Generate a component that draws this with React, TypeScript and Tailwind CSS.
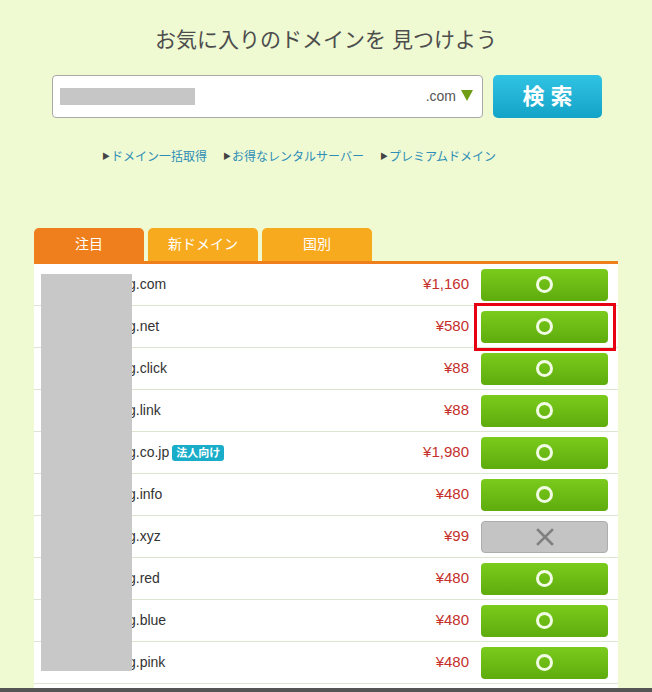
import React from 'react';

type Row = {
  tld: string;
  price: string;
  ok: boolean;
  badge?: string;
};

const rows: Row[] = [
  { tld: 'g.com', price: '¥1,160', ok: true },
  { tld: 'g.net', price: '¥580', ok: true },
  { tld: 'g.click', price: '¥88', ok: true },
  { tld: 'g.link', price: '¥88', ok: true },
  { tld: 'g.co.jp', price: '¥1,980', ok: true, badge: '法人向け' },
  { tld: 'g.info', price: '¥480', ok: true },
  { tld: 'g.xyz', price: '¥99', ok: false },
  { tld: 'g.red', price: '¥480', ok: true },
  { tld: 'g.blue', price: '¥480', ok: true },
  { tld: 'g.pink', price: '¥480', ok: true },
  { tld: '', price: '', ok: true },
];

const links = ['ドメイン一括取得', 'お得なレンタルサーバー', 'プレミアムドメイン'];

const tabs = [
  { label: '注目', active: true },
  { label: '新ドメイン', active: false },
  { label: '国別', active: false },
];

const OkButton: React.FC = () => (
  <div className="w-[127px] h-[32px] rounded-[4px] bg-gradient-to-b from-[#7acb1c] to-[#5eac0d] flex items-center justify-center">
    <span className="w-[17px] h-[17px] rounded-full border-[3px] border-[#f2fbe4]"></span>
  </div>
);

const NgButton: React.FC = () => (
  <div className="w-[127px] h-[32px] rounded-[4px] bg-[#c4c4c4] border border-[#adadad] flex items-center justify-center">
    <svg width="18" height="18" viewBox="0 0 18 18">
      <path d="M2 2 L16 16 M16 2 L2 16" stroke="#808080" strokeWidth="2.6" strokeLinecap="square" />
    </svg>
  </div>
);

export default function App() {
  return (
    <div
      className="relative h-[692px] overflow-hidden bg-[#effad3]"
      style={{ fontFamily: '"Liberation Sans", "Noto Sans CJK JP", sans-serif' }}
    >
      {/* Heading */}
      <h1 className="pt-[25px] text-center text-[21px] leading-[30px] text-[#4d4d4d]">
        お気に入りのドメインを 見つけよう
      </h1>

      {/* Search */}
      <div className="mt-[20px] flex justify-center gap-[10px] pl-[2px]">
        <div className="relative w-[431px] h-[43px] bg-white border border-[#a9a9a9] rounded-[4px] flex items-center pr-[9px]">
          <span className="absolute left-[7px] top-[12px] w-[135px] h-[17px] bg-[#c6c6c6]"></span>
          <span className="ml-auto text-[14px] text-[#555]">.com</span>
          <svg className="ml-[5px] mb-[2px]" width="12" height="11" viewBox="0 0 12 11">
            <path d="M0 0 H12 L6 11 Z" fill="#6f9e16" />
          </svg>
        </div>
        <button className="w-[109px] h-[43px] rounded-[5px] bg-gradient-to-b from-[#30c3e3] to-[#12a3c8] text-white text-[22px] font-bold tracking-[6px] pl-[6px]">
          検索
        </button>
      </div>

      {/* Links */}
      <div className="mt-[30px] flex gap-[16px] pl-[102px] text-[12px] text-[#2d8db6]">
        {links.map((l) => (
          <span key={l} className="flex items-center">
            <span className="text-[8px] text-[#444] mr-[1px]">▶</span>
            {l}
          </span>
        ))}
      </div>

      {/* Table */}
      <div className="mt-[62px] mx-auto w-[584px]">
        <div className="flex gap-[4px] border-b-[3px] border-[#ee7f1c]">
          {tabs.map((t) => (
            <div
              key={t.label}
              className={`w-[110px] h-[33px] rounded-t-[5px] flex items-center justify-center text-[14px] text-white ${
                t.active ? 'bg-[#ee7f1c]' : 'bg-[#f7aa1e]'
              }`}
            >
              {t.label}
            </div>
          ))}
        </div>

        <div className="relative bg-white">
          {rows.map((r, i) => (
            <div
              key={i}
              className="h-[42px] flex items-center border-b border-[#dbe5d2] pl-[94px] pr-[10px]"
            >
              <span className="text-[14px] text-[#333]">{r.tld}</span>
              {r.badge && (
                <span className="ml-[3px] h-[16px] px-[4px] rounded-[3px] bg-[#19adc9] text-white text-[11px] font-bold leading-[16px]">
                  {r.badge}
                </span>
              )}
              <span className="ml-auto mr-[12px] text-[15px] text-[#c4302b]">{r.price}</span>
              <div className="relative">
                {r.ok ? <OkButton /> : <NgButton />}
                {i === 1 && (
                  <span className="absolute -left-[7px] -top-[8px] w-[142px] h-[48px] border-[3px] border-[#e60012]"></span>
                )}
              </div>
            </div>
          ))}
          {/* masked domain names */}
          <span className="absolute left-[7px] top-[10px] w-[91px] h-[397px] bg-[#c8c8c8]"></span>
        </div>
      </div>

      {/* window edge */}
      <div className="absolute left-0 right-0 bottom-0 h-[4px] bg-[#555]"></div>
    </div>
  );
}
